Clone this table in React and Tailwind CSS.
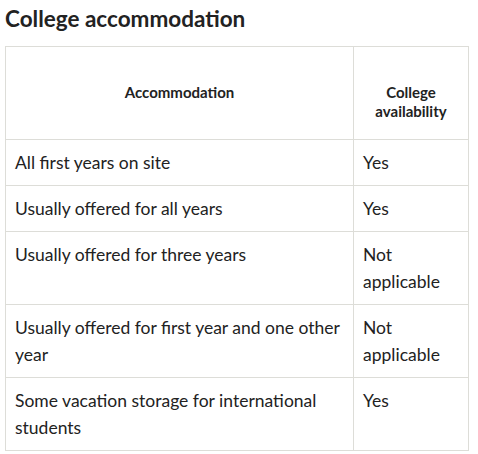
import React from 'react'

const rows = [
  ['All first years on site', 'Yes'],
  ['Usually offered for all years', 'Yes'],
  ['Usually offered for three years', 'Not applicable'],
  ['Usually offered for first year and one other year', 'Not applicable'],
  ['Some vacation storage for international students', 'Yes'],
]

export default function App() {
  return (
    <div className="bg-white w-[478px] h-[454px] px-[5px] pt-[5px] text-[#222] font-['Lato',sans-serif]">
      <h2 className="text-[22.5px] font-bold leading-[28px] mb-[13px]">College accommodation</h2>
      <div className="w-[464px] border border-[#ddddd8]">
        <div className="grid grid-cols-[348px_1fr] h-[92px]">
          <div className="border-r border-[#ddddd8] text-center text-[15px] font-bold leading-[19px] pt-[36px]">
            Accommodation
          </div>
          <div className="text-center text-[15px] font-bold leading-[19px] pt-[36px] px-2">
            College<br />availability
          </div>
        </div>
        {rows.map(([a, b]) => (
          <div key={a} className="grid grid-cols-[348px_1fr] border-t border-[#ddddd8] text-[17.5px] leading-[27px]">
            <div className="border-r border-[#ddddd8] py-[9px] pl-[9px] pr-[6px]">{a}</div>
            <div className="py-[9px] pl-[9px] pr-6">{b}</div>
          </div>
        ))}
      </div>
    </div>
  )
}
